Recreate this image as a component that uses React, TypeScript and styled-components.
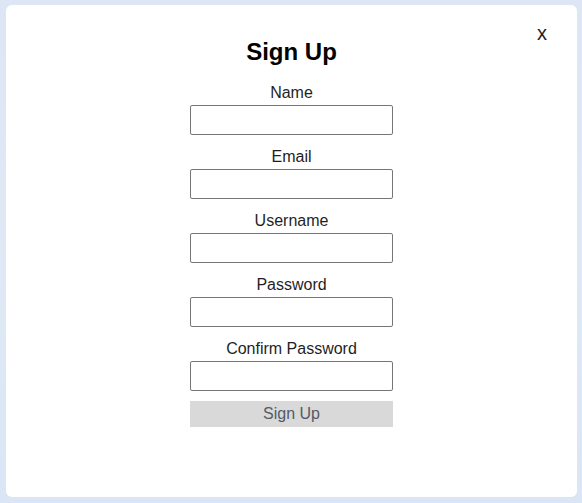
import styled, { createGlobalStyle } from 'styled-components';

const GlobalStyle = createGlobalStyle`
  html, body {
    margin: 0;
    padding: 0;
  }
  body {
    background-color: #dde7f5;
    font-family: "Liberation Sans", Arial, sans-serif;
    color: #1f1f1f;
  }
`;

const Backdrop = styled.div`
  box-sizing: border-box;
  width: 582px;
  height: 503px;
  padding: 5px 5px 6px 6px;
  background: linear-gradient(180deg, #dce6f4 0%, #dfe9f6 50%, #dae6f5 100%);
`;

const Modal = styled.div`
  position: relative;
  box-sizing: border-box;
  width: 571px;
  height: 492px;
  padding-top: 34px;
  background-color: #fff;
  border-radius: 6px;
  display: flex;
  flex-direction: column;
  align-items: center;
`;

const Close = styled.button`
  position: absolute;
  top: 17px;
  right: 30px;
  padding: 0;
  border: none;
  background: none;
  font-family: inherit;
  font-size: 20px;
  line-height: 23px;
  color: #222;
  cursor: pointer;
`;

const Title = styled.h2`
  margin: 0 0 19px;
  font-size: 24px;
  line-height: 26px;
  font-weight: 700;
  color: #000;
`;

const Form = styled.form`
  width: 203px;
  display: flex;
  flex-direction: column;
`;

const Field = styled.div`
  display: flex;
  flex-direction: column;
  align-items: center;
  margin-bottom: 13px;

  &:last-of-type {
    margin-bottom: 10px;
  }
`;

const Label = styled.label`
  font-size: 16px;
  line-height: 18px;
  margin-bottom: 3px;
  color: #1f1f1f;
`;

const Input = styled.input`
  box-sizing: border-box;
  width: 203px;
  height: 30px;
  border: 1px solid #767676;
  border-radius: 2px;
  padding: 1px 2px;
  font-size: 14px;
  background: #fff;
`;

const Submit = styled.button`
  width: 203px;
  height: 26px;
  border: none;
  padding: 0;
  background-color: #d9d9d9;
  font-family: inherit;
  font-size: 16px;
  line-height: 26px;
  color: #555a66;
`;

const fields = [
  { id: 'name', label: 'Name', type: 'text' },
  { id: 'email', label: 'Email', type: 'email' },
  { id: 'username', label: 'Username', type: 'text' },
  { id: 'password', label: 'Password', type: 'password' },
  { id: 'confirm', label: 'Confirm Password', type: 'password' },
];

const App: React.FC = () => {
  return (
    <>
      <GlobalStyle />
      <Backdrop>
        <Modal>
          <Close type='button'>x</Close>
          <Title>Sign Up</Title>
          <Form onSubmit={(e) => e.preventDefault()}>
            {fields.map((f) => (
              <Field key={f.id}>
                <Label htmlFor={f.id}>{f.label}</Label>
                <Input id={f.id} type={f.type} />
              </Field>
            ))}
            <Submit type='submit'>Sign Up</Submit>
          </Form>
        </Modal>
      </Backdrop>
    </>
  );
};

export default App;
